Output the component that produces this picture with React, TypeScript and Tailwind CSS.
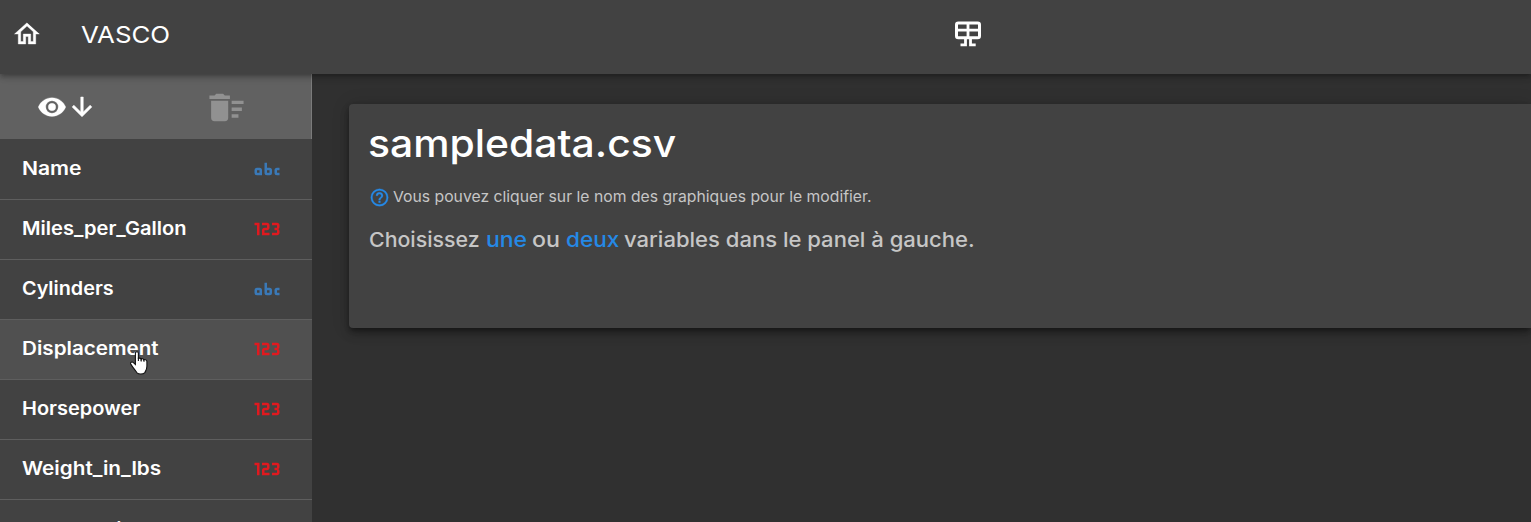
type IconProps = { path: string; className?: string };

const HOME = "M12 5.69L17 10.19V18H15V12H9V18H7V10.19L12 5.69M12 3L2 12H5V20H11V14H13V20H19V12H22";
const EYE =
  "M12,9A3,3 0 0,0 9,12A3,3 0 0,0 12,15A3,3 0 0,0 15,12A3,3 0 0,0 12,9M12,17A5,5 0 0,1 7,12A5,5 0 0,1 12,7A5,5 0 0,1 17,12A5,5 0 0,1 12,17M12,4.5C7,4.5 2.73,7.61 1,12C2.73,16.39 7,19.5 12,19.5C17,19.5 21.27,16.39 23,12C21.27,7.61 17,4.5 12,4.5Z";
const ARROW_DOWN = "M11,4H13V16L18.5,10.5L19.92,11.92L12,19.84L4.08,11.92L5.5,10.5L11,16V4Z";
const DELETE_SWEEP =
  "M15,16H19V18H15V16M15,8H22V10H15V8M15,12H21V14H15V12M3,18A2,2 0 0,0 5,20H11A2,2 0 0,0 13,18V8H3V18M14,5H11L10,4H6L5,5H2V7H14V5Z";
const NUMERIC =
  "M4,17V9H2V7H6V17H4M22,15C22,16.11 21.1,17 20,17H16V15H20V13H18V11H20V9H16V7H20A2,2 0 0,1 22,9V10.5A1.5,1.5 0 0,1 20.5,12A1.5,1.5 0 0,1 22,13.5V15M14,15V17H8V13C8,11.89 8.9,11 10,11H12V9H8V7H12A2,2 0 0,1 14,9V11C14,12.11 13.1,13 12,13H10V15H14Z";
const ALPHA =
  "M6,11A2,2 0 0,1 8,13V17H4A2,2 0 0,1 2,15V13A2,2 0 0,1 4,11H6M4,13V15H6V13H4M20,13V15H22V17H20A2,2 0 0,1 18,15V13A2,2 0 0,1 20,11H22V13H20M12,7V11H14A2,2 0 0,1 16,13V15A2,2 0 0,1 14,17H12A2,2 0 0,1 10,15V7H12M12,15H14V13H12V15Z";
const HELP =
  "M11,18H13V16H11V18M12,2A10,10 0 0,0 2,12A10,10 0 0,0 12,22A10,10 0 0,0 22,12A10,10 0 0,0 12,2M12,20C7.59,20 4,16.41 4,12C4,7.59 7.59,4 12,4C16.41,4 20,7.59 20,12C20,16.41 16.41,20 12,20M12,6A4,4 0 0,0 8,10H10A2,2 0 0,1 12,8A2,2 0 0,1 14,10C14,12 11,11.75 11,15H13C13,12.75 16,12.5 16,10A4,4 0 0,0 12,6Z";

function Icon({ path, className = "" }: IconProps) {
  return (
    <svg viewBox="0 0 24 24" fill="currentColor" fillRule="evenodd" className={`shrink-0 ${className}`}>
      <path d={path} />
    </svg>
  );
}

function Board() {
  return (
    <svg viewBox="0 0 28 26" className="h-[26px] w-[28px]" fill="none" stroke="#fff" strokeWidth="3">
      <rect x="2.5" y="2" width="23" height="14.8" rx="1.8" />
      <path d="M2 9.2H26M14 2V17" strokeWidth="2.8" />
      <path d="M11.5 17V23.9H6.5M16.5 17V23.9H21.7" strokeWidth="2.8" />
    </svg>
  );
}

function Pointer() {
  return (
    <svg viewBox="0 0 18 24" className="absolute left-[129.5px] top-[31px] h-6 w-[18px]">
      <path
        d="M5.4 2.3C5.4 .2 8.4 .2 8.4 2.3V8C8.6 6.7 10.9 6.8 11.1 8.3C11.6 7.2 13.6 7.5 13.8 9C14.5 8.1 16.9 8.5 16.9 10.5V15.3C16.9 18.3 15.9 19.5 14.8 21.6C13.2 23.5 8.8 23.5 7 21.8C5.7 19.8 3.7 17.5 2.1 15.1L.8 13.1C-.1 11.5 2 10.3 3.4 11.6L5.4 13.5Z"
        fill="#fff"
        stroke="#111"
        strokeWidth="1.1"
      />
      <path d="M8.4 6.5V10M11.2 7.8V10.4M14 8.6V10.8" stroke="#111" strokeWidth="1.1" fill="none" />
    </svg>
  );
}

const VARIABLES = [
  { name: "Name", stretch: "scale-x-[1.14]", numeric: false },
  { name: "Miles_per_Gallon", stretch: "scale-x-[1.085]", numeric: true },
  { name: "Cylinders", stretch: "scale-x-[1.07]", numeric: false },
  { name: "Displacement", stretch: "scale-x-[1.115]", numeric: true, hovered: true },
  { name: "Horsepower", stretch: "scale-x-[1.08]", numeric: true },
  { name: "Weight_in_lbs", stretch: "scale-x-[1.12]", numeric: true },
  { name: "Acceleration", stretch: "scale-x-[1.1]", numeric: true },
];

export default function App() {
  return (
    <div className="flex h-[522px] w-full flex-col overflow-hidden bg-[#303030] font-['Inter',sans-serif] text-white">
      <header className="z-10 flex h-[74px] shrink-0 items-center bg-[#424242] pl-3 shadow-[0_2px_4px_-1px_rgba(0,0,0,0.2),0_4px_5px_rgba(0,0,0,0.14),0_1px_10px_rgba(0,0,0,0.12)]">
        <Icon path={HOME} className="-mt-[7px] size-[30px] stroke-white stroke-[0.3]" />
        <span className="-mt-[5px] ml-[39px] w-[872px] text-[23.5px] leading-8">
          <span className="inline-block origin-left scale-x-[1.1]">VASCO</span>
        </span>
        <div className="-mt-[6px] ml-[1px]">
          <Board />
        </div>
      </header>

      <div className="flex min-h-0 flex-1">
        <aside className="flex w-[312px] shrink-0 flex-col overflow-hidden bg-[#424242]">
          <div className="flex h-[65px] shrink-0 border-r border-[#7b7b7b] bg-[#616161] pl-[37px] pt-[17.5px]">
            <Icon path={EYE} className="size-[30px] stroke-white stroke-[0.2]" />
            <Icon path={ARROW_DOWN} className="size-[30px] stroke-white stroke-[0.4]" />
            <Icon path={DELETE_SWEEP} className="-mt-[5px] ml-[109px] size-[41px] text-[#919191]" />
          </div>
          <ul className="pt-px">
            {VARIABLES.map((v) => (
              <li
                key={v.name}
                className={`relative flex h-[60px] items-start justify-between border-b border-[#5e5e5e] pl-[22px] pr-[30px] last:pt-px ${
                  v.hovered ? "bg-[#505050]" : ""
                }`}
              >
                <span className={`mt-[14px] origin-left text-[18.5px] font-[580] leading-7 ${v.stretch}`}>
                  {v.name}
                </span>
                {v.numeric ? (
                  <Icon path={NUMERIC} className="mt-[14px] size-[30px] text-[#e0191f]" />
                ) : (
                  <Icon path={ALPHA} className="mt-[14px] size-[30px] text-[#3a79b7]" />
                )}
                {v.hovered && <Pointer />}
              </li>
            ))}
          </ul>
        </aside>

        <main className="min-w-0 flex-1 pl-[37px] pt-[30px]">
          <section className="h-[224px] rounded-l bg-[#424242] pl-[19px] shadow-[0_3px_5px_-1px_rgba(0,0,0,0.4),0_6px_10px_rgba(0,0,0,0.2),0_1px_18px_rgba(0,0,0,0.16)]">
            <h1 className="pt-[15px] text-[38px] font-[470] leading-[48px]">
              <span className="inline-block origin-left scale-x-[1.075]">sampledata.csv</span>
            </h1>
            <p className="mt-[20px] flex h-[21px] items-center pl-[1px] text-[15px] text-[#c6c6c6]">
              <Icon path={HELP} className="size-[21px] stroke-[#2589e6] stroke-[0.3] text-[#2589e6]" />
              <span className="ml-[3px] -mt-px origin-left scale-x-[1.049] whitespace-nowrap">
                Vous pouvez cliquer sur le nom des graphiques pour le modifier.
              </span>
            </p>
            <p className="mt-[16px] flex pl-px text-[20.5px] font-[540] leading-8 text-[#c6c6c6]">
              <span className="w-[117px] origin-left scale-x-[1.04]">Choisissez</span>
              <span className="w-[46px] text-[#2589e6]">
                <span className="inline-block origin-left scale-x-[1.12]">une</span>
              </span>
              <span className="w-[34px]">
                <span className="inline-block origin-left scale-x-[1.13]">ou</span>
              </span>
              <span className="w-[58px] text-[#2589e6]">
                <span className="inline-block origin-left scale-x-[1.1]">deux</span>
              </span>
              <span className="origin-left scale-x-[1.075] whitespace-nowrap">variables dans le panel à gauche.</span>
            </p>
          </section>
        </main>
      </div>
    </div>
  );
}
